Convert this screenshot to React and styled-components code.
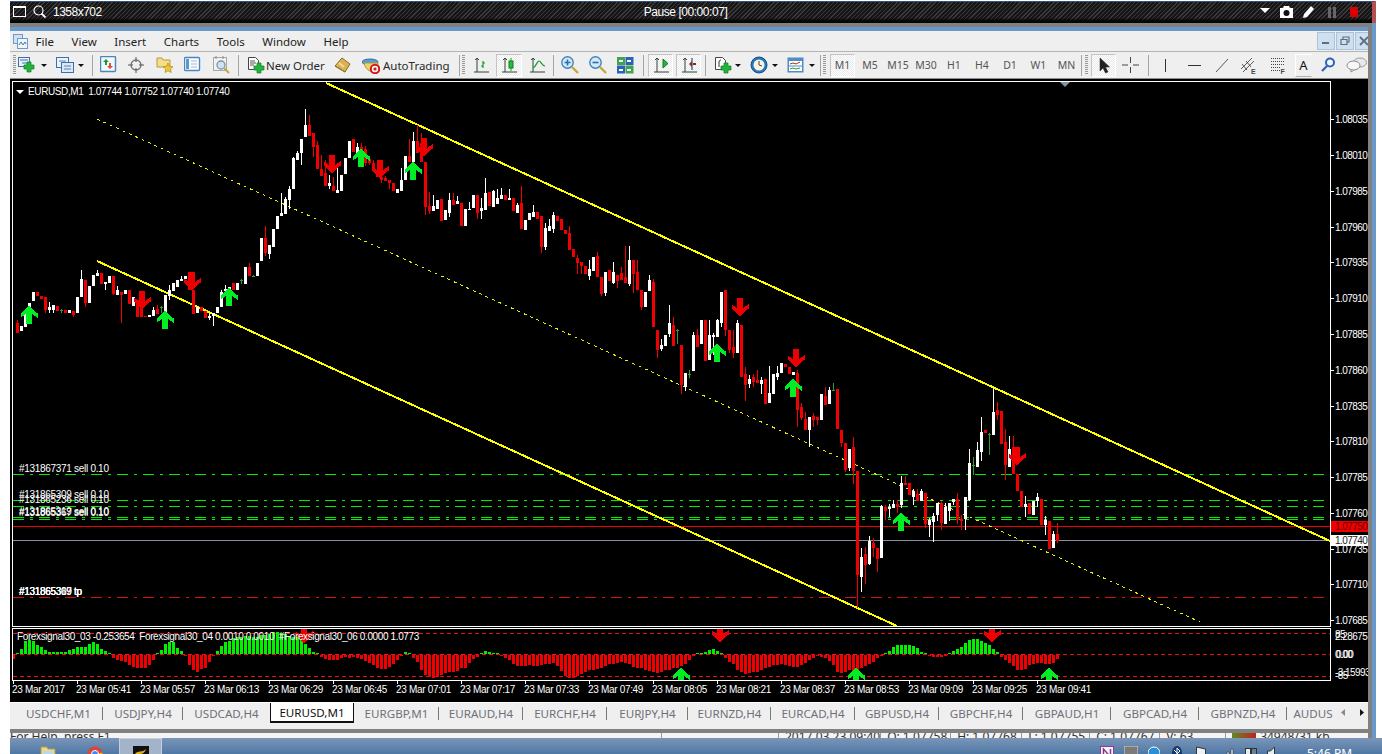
import React from "react";
import styled, { createGlobalStyle } from "styled-components";

const GlobalStyle = createGlobalStyle`
  html, body {
    margin: 0;
    padding: 0;
    background: #fff;
  }
  * {
    box-sizing: border-box;
  }
`;

const UI_FONT = `"Noto Sans", "Liberation Sans", sans-serif`;
const CHART_FONT = `"Liberation Sans", Arial, sans-serif`;

// candle rows: colour, body top, body bottom, wick top, wick bottom. y values are 3x crop units from the base y
const SEGMENT_A = `r 668 698 660 700|w 678 692|w 636 680|w 610 630|w 576 603|r 576 588|r 588 596|r 592 630 592 638|w 622 630 606 638|w 616 630 616 640|r 618 632|g 628 640|r 630 640|w 630 640|r 632 645 632 652|w 592 640|w 538 590 510 590|r 540 610 540 622|w 558 610|w 526 558|w 518 528 510 528|r 520 552|w 546 552 546 570|w 528 548|r 528 582 528 586|w 570 586 558 586|r 576 586 576 668|w 570 582|r 570 612|w 592 618|r 600 650|r 620 650|r 648 652|w 645 650|w 630 648 620 648|r 628 642 615 642|g 618 640|w 585 635|w 570 588 556 600|w 550 572|w 540 560|w 536 544 528 544|w 528 536|r 515 570|r 570 642|w 620 640|r 622 634|r 634 654|w 648 654 640 660|w 640 648 640 678|w 622 640|w 575 622 570 622|w 568 574 556 574|w 562 570|r 548 570|w 550 570|g 538 552|w 502 552|r 502 528 490 528|g 525 530|w 490 528|w 415 482|r 415 460 378 468|w 435 462 435 476|w 388 440|w 348 386|w 338 348 280 348|w 298 342 292 342|w 268 300 258 326|w 174 266 170 266|w 158 180 154 180|w 118 158 118 196|w 75 110 28 110|r 75 108 45 108|r 98 140 98 170|r 135 208 124 208|r 208 228 165 228|r 220 258 180 258|w 250 258 225 266|r 258 272 230 272|w 270 278 196 278|w 225 272|w 175 222|w 124 175|r 118 155|w 140 160 130 160|r 140 160 128 160|r 148 188 138 198|r 178 190 178 196|r 188 210 180 210|r 210 232|r 232 240 232 248|r 234 244 228 244|r 240 250 240 268|r 250 272|w 268 278|w 240 272 205 272|w 168 240|r 168 186 118 186|w 124 186 96 186|r 124 160 75 160|r 130 185 100 185|r 186 320 186 346|r 318 332 276 342|w 318 332 285 332|w 300 328|r 296 362|w 330 360|w 300 340 280 350|r 300 316 280 316|w 304 312 288 312`;

const SEGMENT_B = `r 128 198|w 148 198|w 146 150 125 150|w 105 145|r 105 158 105 176|w 144 152 114 176|w 98 150 54 150|r 96 138|w 92 140 90 140|w 114 132 88 132|w 105 117 85 117|r 105 120|w 114 120 88 120|r 114 154|w 134 160 130 160|r 130 208 78 208|w 180 210|w 158 180|w 155 170 136 170|r 155 178|r 168 262 168 278|w 204 262 190 270|w 198 212 178 212|w 165 208 156 220|r 168 184|r 178 210|r 210 222|r 220 270 198 270|r 266 292|r 294 310 285 342|r 306 318 306 342|r 318 342|w 326 348 300 360|w 292 334|r 288 350 276 350|r 350 402 350 408|w 336 400 336 408|r 330 364|w 336 368 306 372|r 344 362 344 384|r 340 360 322 360|r 350 370 258 370|w 300 372 258 378|r 300 342 300 398|r 336 390 300 390|r 390 440 390 450|w 396 440|w 360 394 346 394|r 366 500 358 500|r 510 570 510 594|w 556 566 538 572|w 526 558|w 490 522 435 532|r 495 558 472 558|g 508 552|r 555 676 555 702|w 640 682 640 692|g 640 644 630 654|w 525 632 516 632|r 525 562 507 562|w 480 552|r 480 603|w 525 600 480 600|w 524 530 518 584|w 480 532 476 532|w 396 490 396 500|r 390 510 390 528|r 510 570 510 578|r 560 580 510 594|w 490 578 480 578|r 495 650|r 642 675 620 722|w 656 672 645 684|r 652 666 642 680|r 660 670 630 670|w 660 672 650 702|r 656 732|w 700 730 618 730|w 642 702|w 638 652 618 660|w 610 640|r 612 622|r 620 642|w 636 644|r 640 750 630 800|r 740 774 730 780|r 778 810 756 810|w 770 810 770 862|r 768 780 758 800|r 770 780 770 795|w 702 780|r 708 735 682 735|w 690 732 682 732|g 686 690 670 692|r 686 806`;

const SEGMENT_C = `r 180 220 180 232|r 220 300 220 305|w 236 295 236 304|r 232 304 202 342|r 304 615 304 714|w 560 620 534 666|r 552 584 532 642|w 512 582 498 586|r 520 534 504 562|r 534 566 534 606|w 408 564 404 564|r 412 424 404 450|w 410 416 402 440|w 402 414 390 414|r 402 412 390 430|w 340 406 318 414|r 340 345 318 345|r 340 374|w 362 380 356 404|r 372 394 358 394|w 364 394 358 394|r 370 462 370 474|w 450 464 445 500|w 438 456 428 515|w 400 436 400 452|r 400 460 392 480|w 412 462 400 462|w 400 422 400 454|w 388 396 388 404|r 388 450 370 462|r 446 452 436 480|w 380 448 380 480|w 280 390 238 394|g 282 286 262 314|w 240 290 216 290|w 186 246 140 272|r 180 190|g 188 192 188 254|w 126 194 58 194|r 120 135 96 150|r 124 222|r 216 286 178 330|w 236 292 198 292|r 230 312 198 312|r 312 362|r 364 412|w 402 410 378 440|r 400 432|w 392 434|w 380 394 368 410|r 388 465|w 450 465 438 495|r 454 538|w 492 534 484 534|r 492 513 460 518`;

const CANDLE_FILL = { r: "#f00000", w: "#ffffff", g: "#2f9e2f" };

const parseSegment = (text, baseY) =>
  text.split("|").map((row) => {
    const [kind, top, bottom, high, low] = row.split(" ");
    const toY = (v) => Math.round(baseY + Number(v) / 3);
    return {
      kind,
      top: toY(top),
      bottom: toY(bottom),
      high: high ? toY(high) : toY(top),
      low: low ? toY(low) : toY(bottom),
    };
  });

const CANDLES = [
  ...parseSegment(SEGMENT_A, 100),
  ...parseSegment(SEGMENT_B, 160),
  ...parseSegment(SEGMENT_C, 370),
];

const HISTOGRAM = [
  -12, 4, 16, 38, 42, 40, 28, 20, 12, 7, 5, 6, 5, 6, 12, 14, 20, 20, 22, 30, 36, 30, 14, 8, 3, -8, -14, -18, -20, -30, -35, -40, -40, -38, -30, -15, 2, 12, 30, 36, 36, 18, 8, -2, -30, -45, -50, -42, -38, -22, -4, 10, 25, 35, 40, 48, 50, 50, 55, 55, 50, 52, 56, 56, 60, 66, 67, 62, 60, 55, 52, 50, 44, 30, 18, 6, 1, -6, -12, -16, -14, -14, -10, -6, -8, -5, -10, -12, -18, -25, -30, -38, -42, -42, -36, -28, -15, -2, 5, 2, -8, -22, -45, -60, -65, -68, -65, -60, -55, -50, -50, -48,
  -40, -40, -25, -12, -6, 3, 8, 5, 3, 2, -2, -8, -16, -28, -32, -32, -32, -30, -32, -32, -30, -28, -26, -24, -34, -48, -64, -70, -70, -64, -58, -52, -46, -46, -42, -38, -32, -26, -26, -24, -20, -24, -28, -36, -38, -40, -44, -48, -52, -54, -50, -46, -44, -40, -40, -34, -28, -16, -4, 1, 2, 6, 12, 14, 10, 2, -8, -20, -26, -44, -50, -58, -54, -52, -50, -46, -40, -36, -30, -30, -28, -30, -34, -36, -36, -30, -24, -16, -8, -4, -6, -8, -18, -30, -50, -54, -50, -46, -48, -50, -40, -34, -26, -20, -8, -2, 2, 10, 20, 26, 28, 28, 26, 24, 18,
  6, 1, -4, -6, -5, -6, -3, 4, 8, 14, 22, 34, 42, 44, 44, 40, 34, 28, 14, 6, -6, -16, -24, -32, -44, -46, -42, -30, -26, -24, -24, -28, -28, -24, -12,
];

const UP_SIGNALS = [[29, 315], [165, 320], [229, 297], [361, 158], [413, 171], [717, 353], [793, 388], [901, 522]];
const DOWN_SIGNALS = [[142, 300], [192, 281], [332, 164], [380, 169], [424, 147], [740, 307], [796, 358], [1017, 456]];

const LEVELS = [
  { y: 474, color: "#00ee00" },
  { y: 500, color: "#00ee00" },
  { y: 506, color: "#00ee00" },
  { y: 517, color: "#00ee00" },
  { y: 519, color: "#00ee00" },
  { y: 597, color: "#d81010" },
];

const TRADE_LABELS = [
  ["#131867371 sell 0.10", 19, 472],
  ["#131865236 sell 0.10", 19, 503],
  ["#131865309 sell 0.10", 19, 498],
  ["#131865367 sell 0.10", 19, 516],
  ["#131865319 sell 0.10", 19, 515],
  ["#131865309 tp", 19, 595],
  ["#131865367 tp", 19, 595],
  ["#131865319 tp", 19, 595],
];

const PRICES = ["1.08035", "1.08010", "1.07985", "1.07960", "1.07935", "1.07910", "1.07885", "1.07860", "1.07835", "1.07810", "1.07785", "1.07760", "1.07735", "1.07710", "1.07685"];

const TIMES = ["23 Mar 2017", "23 Mar 05:41", "23 Mar 05:57", "23 Mar 06:13", "23 Mar 06:29", "23 Mar 06:45", "23 Mar 07:01", "23 Mar 07:17", "23 Mar 07:33", "23 Mar 07:49", "23 Mar 08:05", "23 Mar 08:21", "23 Mar 08:37", "23 Mar 08:53", "23 Mar 09:09", "23 Mar 09:25", "23 Mar 09:41"];

const TABS = [
  ["USDCHF,M1", 89],
  ["USDJPY,H4", 80],
  ["USDCAD,H4", 87],
  ["EURUSD,M1", 84],
  ["EURGBP,M1", 85],
  ["EURAUD,H4", 84],
  ["EURCHF,H4", 84],
  ["EURJPY,H4", 81],
  ["EURNZD,H4", 83],
  ["EURCAD,H4", 84],
  ["GBPUSD,H4", 84],
  ["GBPCHF,H4", 84],
  ["GBPAUD,H1", 88],
  ["GBPCAD,H4", 88],
  ["GBPNZD,H4", 88],
];

const MENU = ["File", "View", "Insert", "Charts", "Tools", "Window", "Help"];

const Page = styled.div`
  width: 1382px;
  height: 754px;
  padding: 1px 0 0 10px;
  display: flex;
  flex-direction: column;
  overflow: hidden;
  background: #fff;
`;

const Recorder = styled.header`
  flex: 0 0 22px;
  margin-right: 6px;
  display: flex;
  align-items: center;
  border-top: 1px solid #34527e;
  border-right: 4px solid #b65050;
  padding-bottom: 2px;
  color: #fff;
  font: 12px ${CHART_FONT};
  letter-spacing: -0.5px;
  background:
    linear-gradient(180deg, rgba(0, 0, 0, 0) 75%, #050505 90%),
    repeating-linear-gradient(135deg, #3a3a3a 0 1px, #161616 1px 3px);
`;

const RecorderSide = styled.div`
  flex: 1;
  display: flex;
  align-items: center;
  justify-content: ${(p) => (p.$end ? "flex-end" : "flex-start")};
  padding: ${(p) => (p.$end ? "0 14px 0 0" : "0 0 0 3px")};
`;

const RecorderTitle = styled.span`
  letter-spacing: -0.45px;
`;

const SizeText = styled.span`
  display: flex;
  margin-left: 7px;
`;

const Terminal = styled.div`
  flex: 1;
  min-height: 0;
  margin-right: 6px;
  display: flex;
  flex-direction: column;
  border-right: 4px solid #6a97c9;
  background: #808080;
`;

const TerminalInner = styled.div`
  flex: 1;
  min-height: 0;
  display: flex;
  flex-direction: column;
  border-top: 4px solid #808080;
  border-right: 4px solid #808080;
  background: #efefef;
  overflow: hidden;
`;

const MenuBar = styled.nav`
  flex: 0 0 25px;
  display: flex;
  align-items: center;
  gap: 17.6px;
  padding-left: 3px;
  border-top: 4px solid #6a97c9;
  border-bottom: 1px solid #b4b4b4;
  background: #efefef;
  color: #222;
  font: 11.5px ${UI_FONT};
`;

const MenuLogo = styled.span`
  display: flex;
  margin-right: -10px;
`;

const WindowButtons = styled.div`
  margin-left: auto;
  display: flex;
  gap: 1px;
  margin-right: -5px;
`;

const WindowButton = styled.span`
  width: 18px;
  height: 18px;
  display: flex;
  align-items: center;
  justify-content: center;
  border: 1px solid #a9c3da;
  background: #cfe0f0;
`;

const ToolBar = styled.div`
  flex: 0 0 27px;
  display: flex;
  align-items: center;
  border-bottom: 1px solid #8d8d8d;
  background: #efefef;
  color: #2a2a2a;
  font: 11.5px ${UI_FONT};
`;

const Slot = styled.span`
  flex: 0 0 ${(p) => p.$w}px;
  height: 23px;
  margin-left: ${(p) => p.$ml || 0}px;
  display: flex;
  align-items: center;
  justify-content: center;
  color: ${(p) => (p.$ink ? "#111" : "#555")};
  font-size: ${(p) => (p.$ink ? 13 : 10.5)}px;
  ${(p) =>
    p.$pressed &&
    `
    border: 1px solid #c4c4c4;
    border-right-color: #fff;
    border-bottom-color: #fff;
    background: repeating-conic-gradient(#fff 0 25%, #e9e9e9 0 50%) 0 0 / 2px 2px;
  `}
  ${(p) =>
    p.$raised &&
    `
    border: 1px solid #fff;
    border-right-color: #efefef;
    border-bottom-color: #b0b0b0;
  `}
`;

const TextTool = styled.span`
  flex: 0 0 ${(p) => p.$w}px;
  display: flex;
  align-items: center;
  padding-left: ${(p) => p.$pl}px;
  gap: ${(p) => p.$gap}px;
  white-space: nowrap;
`;

const ToolSep = styled.span`
  flex: 0 0 1px;
  height: 21px;
  margin-left: ${(p) => p.$ml || 0}px;
  background: #a6a6a6;
`;

const Grip = styled.span`
  flex: 0 0 ${(p) => p.$w}px;
  height: 20px;
  background: repeating-linear-gradient(180deg, #9a9a9a 0 1px, transparent 1px 2px) center / 3px 100% no-repeat;
`;

const Caret = styled.span`
  flex: 0 0 ${(p) => p.$w}px;
  display: flex;
  justify-content: center;
  &::before {
    content: "";
    border-left: 3px solid transparent;
    border-right: 3px solid transparent;
    border-top: 3px solid #111;
  }
`;

const ChartArea = styled.main`
  flex: 0 0 623px;
  min-height: 0;
  display: flex;
  flex-direction: column;
  padding: 2px 0 0 2px;
  background: #000;
`;

const PaneRow = styled.div`
  flex: 0 0 ${(p) => p.$h}px;
  height: ${(p) => p.$h}px;
  min-height: 0;
  margin-top: ${(p) => p.$mt || 0}px;
  display: flex;
`;

const Pane = styled.div`
  position: relative;
  flex: 0 0 1319px;
  border: 1px solid #fff;
  overflow: hidden;
  svg {
    display: block;
  }
`;

const PaneTitle = styled.div`
  position: absolute;
  top: ${(p) => p.$top}px;
  left: ${(p) => p.$left}px;
  display: flex;
  align-items: center;
  gap: 4px;
  color: #fff;
  font: 10px ${CHART_FONT};
  letter-spacing: -0.38px;
  white-space: pre;
`;

const Triangle = styled.span`
  border-left: 4px solid transparent;
  border-right: 4px solid transparent;
  border-top: 4px solid #fff;
`;

const ShiftMarker = styled.span`
  position: absolute;
  top: 0;
  left: 1047px;
  border-left: 5px solid transparent;
  border-right: 5px solid transparent;
  border-top: 5px solid #7f93a8;
`;

const PriceAxis = styled.div`
  position: relative;
  flex: 1;
  min-height: 0;
  padding-top: ${(p) => p.$pt || 0}px;
  overflow: hidden;
  color: #fff;
  font: 10px ${CHART_FONT};
  letter-spacing: -0.55px;
`;

const PriceTick = styled.div`
  height: 35.77px;
  display: flex;
  align-items: center;
  padding-left: 4px;
  &::before {
    content: "";
    position: absolute;
    left: 0;
    width: 3px;
    height: 1px;
    background: #fff;
  }
`;

const PriceTag = styled.span`
  position: absolute;
  top: ${(p) => p.$top}px;
  left: 0;
  right: 0;
  height: 11px;
  padding-left: 4px;
  line-height: 11px;
  background: ${(p) => p.$bg};
  color: ${(p) => p.$color};
`;

const SubLabel = styled.span`
  position: absolute;
  top: ${(p) => p.$top}px;
  left: ${(p) => p.$left || 4}px;
  white-space: nowrap;
`;

const TimeAxis = styled.div`
  flex: 0 0 21px;
  display: flex;
  color: #fff;
  font: 10px ${CHART_FONT};
  letter-spacing: -0.32px;
`;

const TimeCell = styled.div`
  position: relative;
  flex: 0 0 64px;
  padding-top: 3px;
  white-space: nowrap;
  &::before {
    content: "";
    position: absolute;
    top: 0;
    left: 1px;
    width: 1px;
    height: 3px;
    background: #fff;
  }
`;

const TabBar = styled.div`
  flex: 0 0 27px;
  display: flex;
  align-items: flex-start;
  padding-left: 4px;
  border-top: 1px solid #fff;
  background: #efefef;
  color: #6f6f78;
  font: 11.6px ${UI_FONT};
  overflow: hidden;
  white-space: nowrap;
`;

const Tab = styled.span`
  position: relative;
  flex: 0 0 ${(p) => p.$w}px;
  height: ${(p) => (p.$active ? 20 : 19)}px;
  margin-top: ${(p) => (p.$active ? 0 : 1)}px;
  display: flex;
  align-items: center;
  justify-content: center;
  ${(p) =>
    p.$active &&
    `
    background: #fff;
    color: #111;
    border: 1px solid #111;
    border-top: 0;
    border-bottom-width: 2px;
  `}
  ${(p) =>
    p.$sep &&
    `
    &::after {
      content: "";
      position: absolute;
      right: 0;
      top: 3px;
      width: 1px;
      height: 13px;
      background: #7a7a7a;
    }
  `}
`;

const TabArrows = styled.span`
  display: flex;
  align-items: center;
  gap: 15px;
  margin-top: 6px;
  margin-left: 2px;
`;

const BottomRule = styled.div`
  flex: 0 0 4px;
  background: #808080;
`;

const StatusBar = styled.footer`
  flex: 0 0 5px;
  display: flex;
  overflow: hidden;
  background: #f4f4f4;
  color: #333;
  font: 12px/14px ${UI_FONT};
`;

const StatusCell = styled.span`
  flex: 0 0 ${(p) => p.$w}px;
  padding-left: ${(p) => p.$pl ?? 6}px;
  display: flex;
  align-items: flex-start;
  gap: 4px;
  border-left: ${(p) => (p.$first ? "0" : "1px solid #9a9a9a")};
  white-space: nowrap;
  line-height: 8px;
`;

const SignalBars = styled.span`
  width: 24px;
  height: 12px;
  background: linear-gradient(90deg, #5e8a20, #c42020);
`;

const Taskbar = styled.div`
  flex: 0 0 16px;
  display: flex;
  padding-top: 8px;
  overflow: hidden;
  background: linear-gradient(180deg, #7a95b8, #4f78a5);
  color: #fff;
  font: 12px ${UI_FONT};
  svg {
    flex: 0 0 auto;
  }
`;

const TaskSlot = styled.span`
  flex: 0 0 auto;
  margin-left: ${(p) => p.$ml}px;
  display: flex;
`;

const ActiveTask = styled.span`
  flex: 0 0 43px;
  height: 16px;
  margin-top: -8px;
  margin-left: ${(p) => p.$ml}px;
  padding: 7px 0 0 13px;
  border: 1px solid #c4d0df;
  border-bottom: 0;
  background: #a3b4c9;
`;

const Clock = styled.span`
  margin-left: 26px;
  margin-top: 1px;
  line-height: 14px;
`;

const ChartText = styled.text`
  fill: #fff;
  font: 10px ${CHART_FONT};
  letter-spacing: -0.3px;
`;

const ARROW = "0,-9.5 8.5,-1.5 8.5,3 2.8,-1.5 2.8,9 -2.8,9 -2.8,-1.5 -8.5,3 -8.5,-1.5";

function Signal({ x, y, down }) {
  return (
    <polygon
      points={ARROW}
      fill={down ? "#ee0000" : "#00ee22"}
      transform={`translate(${x} ${y})${down ? " scale(1 -1)" : ""}`}
    />
  );
}

function Candle({ candle, index }) {
  const x = 16 + index * 4;
  const fill = CANDLE_FILL[candle.kind];
  if (candle.kind === "g") {
    return (
      <g fill={fill}>
        <rect x={x + 1} y={candle.high} width={1} height={candle.low - candle.high} />
        <rect x={x} y={candle.top + 1} width={3} height={1} />
      </g>
    );
  }
  return (
    <g fill={fill}>
      <rect x={x + 1} y={candle.high} width={1} height={candle.low - candle.high} />
      <rect x={x} y={candle.top} width={3} height={candle.bottom - candle.top} />
    </g>
  );
}

function PriceChart() {
  return (
    <svg width="1317" height="544" viewBox="13 82 1317 544" shapeRendering="crispEdges">
      {LEVELS.map((l) => (
        <line key={l.y} x1="13" x2="1330" y1={l.y + 0.5} y2={l.y + 0.5} stroke={l.color} strokeDasharray="11 6 3 6" />
      ))}
      <line x1="13" x2="1330" y1="526.5" y2="526.5" stroke="#f00000" />
      <line x1="13" x2="1330" y1="540.5" y2="540.5" stroke="#8890a4" />
      <line x1="97" y1="119" x2="1200" y2="622" stroke="#eeee00" strokeDasharray="3 4" />
      <line x1="326" y1="83" x2="1330" y2="541" stroke="#ffff00" strokeWidth="2" />
      <line x1="97" y1="261" x2="897" y2="626" stroke="#ffff00" strokeWidth="2" />
      {CANDLES.map((c, i) => (
        <Candle key={i} candle={c} index={i} />
      ))}
      {UP_SIGNALS.map(([x, y]) => (
        <Signal key={x} x={x} y={y} />
      ))}
      {DOWN_SIGNALS.map(([x, y]) => (
        <Signal key={x} x={x} y={y} down />
      ))}
      <g shapeRendering="auto">
        {TRADE_LABELS.map(([text, x, y]) => (
          <ChartText key={text} x={x} y={y}>
            {text}
          </ChartText>
        ))}
      </g>
    </svg>
  );
}

function SignalPane() {
  return (
    <svg width="1317" height="51" viewBox="13 629 1317 51" shapeRendering="crispEdges">
      {[633, 654, 676].map((y) => (
        <line key={y} x1="13" x2="1330" y1={y + 0.5} y2={y + 0.5} stroke="#ee1010" strokeDasharray="4 3" />
      ))}
      {HISTOGRAM.map((v, i) => {
        const h = Math.max(1, Math.round(Math.abs(v) / 3));
        return (
          <rect
            key={i}
            x={12 + i * 4}
            y={v > 0 ? 654 - h : 655}
            width="3"
            height={h}
            fill={v > 0 ? "#00f000" : "#f00000"}
          />
        );
      })}
      <Signal x={304} y={634} down />
      <Signal x={720} y={633} down />
      <Signal x={992} y={633} down />
      <Signal x={681} y={677} />
      <Signal x={856} y={677} />
      <Signal x={1049} y={677} />
    </svg>
  );
}

const Ico = ({ w = 18, h = 18, children }) => (
  <svg width={w} height={h} viewBox={`0 0 ${w} ${h}`}>
    {children}
  </svg>
);

const Plus = ({ x, y, s = 1 }) => (
  <path
    transform={`translate(${x} ${y}) scale(${s})`}
    d="M3 0h4v3h3v4H7v3H3V7H0V3h3z"
    fill="#22b53a"
    stroke="#0e7a22"
    strokeWidth="0.7"
  />
);

const Axes = ({ color = "#2e4632" }) => (
  <path d="M5 2v14M2 16h3M5 16h12M3 4l2-2 2 2" fill="none" stroke={color} strokeWidth="1" />
);

const icons = {
  logo: (
    <Ico w={15} h={15}>
      <rect x="0.5" y="0.5" width="9" height="9" fill="#cfe2f5" stroke="#6f9ac8" />
      <rect x="4.5" y="4.5" width="10" height="10" fill="#eef5fb" stroke="#6f9ac8" />
      <path d="M6 11l2-3 2 3 2-3 1 2" fill="none" stroke="#4a78a8" />
    </Ico>
  ),
  newChart: (
    <Ico>
      <rect x="0.5" y="1.5" width="11" height="9" fill="#eaf2fb" stroke="#3e6fa8" />
      <path d="M2 4h8M4 7h5" stroke="#3e6fa8" />
      <Plus x={6} y={6} />
    </Ico>
  ),
  profiles: (
    <Ico>
      <rect x="0.5" y="1.5" width="12" height="10" fill="#eaf2fb" stroke="#3e6fa8" />
      <rect x="5.5" y="6.5" width="12" height="10" fill="#dbe8f6" stroke="#3e6fa8" />
      <path d="M3 5h7M8 10h7M8 13h7" stroke="#5b83b2" />
    </Ico>
  ),
  market: (
    <Ico>
      <rect x="0.5" y="0.5" width="15" height="15" rx="1" fill="#f2f7fb" stroke="#4a86bd" strokeWidth="1.4" />
      <path d="M6 3l3 3H7v3H5V6H3z" fill="#1c9c35" />
      <path d="M10 13l-3-3h2V7h2v3h2z" fill="#d9532c" />
    </Ico>
  ),
  target: (
    <Ico>
      <circle cx="8" cy="9" r="5" fill="none" stroke="#777" strokeWidth="1.3" />
      <path d="M8 1v5M8 12v5M0 9h5M11 9h5" stroke="#555" />
    </Ico>
  ),
  folderStar: (
    <Ico>
      <path d="M1 2h5l1 2h7v7H1z" fill="#f4dd8c" stroke="#b89a3d" />
      <path d="M12 7l1.6 3.3 3.4.4-2.5 2.4.7 3.4-3.2-1.7-3 1.7.6-3.4-2.5-2.4 3.4-.4z" fill="#f2c530" stroke="#a98820" strokeWidth="0.7" />
    </Ico>
  ),
  navigator: (
    <Ico>
      <rect x="0.5" y="1.5" width="15" height="13" rx="1" fill="#fbfdff" stroke="#4a86bd" strokeWidth="1.4" />
      <rect x="2" y="3" width="3" height="10" fill="#5f96cb" />
      <path d="M7 5h6M7 8h6M7 11h6" stroke="#9bb7d4" />
    </Ico>
  ),
  tester: (
    <Ico>
      <rect x="0.5" y="1.5" width="13" height="13" fill="#f1f1ee" stroke="#a8a8a0" />
      <path d="M3 0v3M10 0v3" stroke="#888" />
      <circle cx="8" cy="9" r="4" fill="#cfe2f3" stroke="#7c94ab" strokeWidth="1.3" />
      <path d="M11 12l5 5" stroke="#c6a640" strokeWidth="2" />
    </Ico>
  ),
  order: (
    <Ico>
      <path d="M1.5 1.5h7l3 3v9h-10z" fill="#fff" stroke="#444" />
      <path d="M3 5h5M3 7h6M3 9h4" stroke="#555" />
      <Plus x={7} y={7} />
    </Ico>
  ),
  gold: (
    <Ico>
      <path d="M1 10L8 2l8 6-5 8z" fill="#d9b253" stroke="#8a6b22" />
      <path d="M1 10l10 6" stroke="#8a6b22" />
      <path d="M5 7l5 4" stroke="#f3dd96" strokeWidth="2" />
    </Ico>
  ),
  auto: (
    <Ico>
      <ellipse cx="8" cy="6" rx="8" ry="3" fill="#5a9bd0" stroke="#2d6ea4" />
      <path d="M2 7c1 6 6 9 10 9l4-4V7z" fill="#ead46a" stroke="#b09a3c" />
      <circle cx="13" cy="13" r="4.2" fill="#fff" stroke="#d01818" strokeWidth="2" />
      <rect x="11.6" y="11.6" width="2.8" height="2.8" fill="#d01818" />
    </Ico>
  ),
  bar: (
    <Ico>
      <Axes />
      <path d="M11 5v7M9 10h2M11 7h2" stroke="#109a28" strokeWidth="1.2" fill="none" />
    </Ico>
  ),
  candle: (
    <Ico>
      <Axes />
      <path d="M11 2v13" stroke="#109a28" />
      <rect x="9" y="5" width="4" height="7" fill="#22c13a" stroke="#0e7a22" />
    </Ico>
  ),
  line: (
    <Ico>
      <Axes />
      <path d="M5 12c3-1 4-7 6-7s3 5 6 5" fill="none" stroke="#109a28" strokeWidth="1.2" />
    </Ico>
  ),
  zoomIn: (
    <Ico>
      <circle cx="6.5" cy="6.5" r="5.7" fill="#d4e9f8" stroke="#3f86bd" strokeWidth="1.4" />
      <path d="M3.5 6.5h6M6.5 3.5v6" stroke="#2d6ea4" strokeWidth="1.6" />
      <path d="M11 11l6 6" stroke="#c6a640" strokeWidth="2.4" />
    </Ico>
  ),
  zoomOut: (
    <Ico>
      <circle cx="6.5" cy="6.5" r="5.7" fill="#d4e9f8" stroke="#3f86bd" strokeWidth="1.4" />
      <path d="M3.5 6.5h6" stroke="#2d6ea4" strokeWidth="1.6" />
      <path d="M11 11l6 6" stroke="#c6a640" strokeWidth="2.4" />
    </Ico>
  ),
  tile: (
    <Ico>
      <rect x="0" y="1" width="8" height="8" fill="#3da54a" />
      <rect x="8.5" y="1" width="8" height="8" fill="#2a62b8" />
      <rect x="0" y="9.5" width="8" height="8" fill="#2a62b8" />
      <rect x="8.5" y="9.5" width="8" height="8" fill="#3da54a" />
      <path d="M2 5h4M10 5h4M2 14h4M10 14h4" stroke="#fff" strokeWidth="2" />
    </Ico>
  ),
  autoscroll: (
    <Ico>
      <Axes />
      <path d="M11 3v9l5-4.5z" fill="#29b33d" stroke="#0e7a22" />
    </Ico>
  ),
  shift: (
    <Ico>
      <Axes />
      <path d="M12 2v12" stroke="#2b5ea8" strokeWidth="1.3" />
      <path d="M9 8l3-3v6zM13 7h3v2h-3z" fill="#8a2a10" />
    </Ico>
  ),
  indicators: (
    <Ico>
      <path d="M1.5 1.5h7l3 3v9h-10z" fill="#fff" stroke="#444" />
      <path d="M5 11V6c0-2 2-2 2-2" fill="none" stroke="#333" />
      <Plus x={7} y={7} />
    </Ico>
  ),
  clock: (
    <Ico>
      <circle cx="9" cy="9" r="8" fill="#2675bd" stroke="#174f86" />
      <circle cx="9" cy="9" r="5.5" fill="#f7f3df" />
      <path d="M9 5v4l3 1" fill="none" stroke="#444" />
    </Ico>
  ),
  templates: (
    <Ico>
      <rect x="0.5" y="1.5" width="16" height="15" fill="#4d8dc8" />
      <rect x="2" y="5" width="13" height="4.5" fill="#fff" />
      <rect x="2" y="10.5" width="13" height="4.5" fill="#fff" />
      <path d="M3 8l3-1 3 1 4-2" fill="none" stroke="#b03010" />
      <path d="M3 13l3-1 3 1 4-1" fill="none" stroke="#2a9a3a" />
    </Ico>
  ),
  pointer: (
    <Ico>
      <path d="M5 2l0 13 3-3 2.5 5 2.5-1-2.5-5h4z" fill="#222" stroke="#222" strokeWidth="0.5" />
    </Ico>
  ),
  crosshair: (
    <Ico>
      <path d="M8.5 1v6M8.5 11v6M0 9h6M11 9h6" stroke="#444" />
    </Ico>
  ),
  vline: (
    <Ico w={3}>
      <path d="M1.5 3v13" stroke="#333" />
    </Ico>
  ),
  hline: (
    <Ico w={13}>
      <path d="M0 9.5h13" stroke="#333" />
    </Ico>
  ),
  trend: (
    <Ico w={14}>
      <path d="M1 16L13 3" stroke="#555" />
    </Ico>
  ),
  channels: (
    <Ico w={18}>
      <path d="M1 13L12 2M3 16L14 5M2 8l5 6M6 5l5 6" stroke="#333" strokeWidth="0.8" fill="none" />
      <text x="11" y="18" fontSize="7" fontFamily="Liberation Sans" fill="#444" fontWeight="700">E</text>
    </Ico>
  ),
  fibo: (
    <Ico w={16}>
      <path d="M1 2.5h14M1 5.5h14M1 8.5h14M1 11.5h10M1 14.5h9" stroke="#444" strokeDasharray="1 1" />
      <text x="10.5" y="18" fontSize="7" fontFamily="Liberation Sans" fill="#444" fontWeight="700">F</text>
    </Ico>
  ),
  search: (
    <Ico w={14} h={16}>
      <circle cx="9" cy="5.5" r="4" fill="#f0f6fc" stroke="#2d62b4" strokeWidth="2" />
      <path d="M6 9l-5 5" stroke="#2d62b4" strokeWidth="2.2" />
    </Ico>
  ),
  chat: (
    <Ico w={22} h={16}>
      <ellipse cx="14" cy="5.5" rx="6.5" ry="4.5" fill="#e8e8e8" stroke="#9a9a9a" />
      <ellipse cx="7.5" cy="8.5" rx="6.5" ry="4.5" fill="#f7f7f7" stroke="#8a8a8a" />
      <path d="M5 13v2l3-2" fill="#f7f7f7" stroke="#8a8a8a" />
    </Ico>
  ),
};

const TIMEFRAMES = [["M5", 28, 1], ["M15", 28], ["M30", 28], ["H1", 28], ["H4", 28], ["D1", 28], ["W1", 29], ["MN", 27]];

function Toolbar() {
  return (
    <ToolBar>
      <Grip $w={8} />
      <Slot $w={18}>{icons.newChart}</Slot>
      <Caret $w={16} />
      <Slot $w={26}>{icons.profiles}</Slot>
      <Caret $w={5} />
      <ToolSep $ml={8} />
      <Slot $w={32}>{icons.market}</Slot>
      <Slot $w={24}>{icons.target}</Slot>
      <Slot $w={31}>{icons.folderStar}</Slot>
      <Slot $w={26}>{icons.navigator}</Slot>
      <Slot $w={32}>{icons.tester}</Slot>
      <ToolSep />
      <TextTool $w={92} $pl={8} $gap={1}>
        {icons.order}
        New Order
      </TextTool>
      <Slot $w={24}>{icons.gold}</Slot>
      <TextTool $w={102} $pl={7} $gap={3}>
        {icons.auto}
        AutoTrading
      </TextTool>
      <ToolSep $ml={2} />
      <Grip $w={7} />
      <Slot $w={28}>{icons.bar}</Slot>
      <Slot $w={26} $ml={1} $pressed>
        {icons.candle}
      </Slot>
      <Slot $w={30}>{icons.line}</Slot>
      <ToolSep $ml={1} />
      <Slot $w={32}>{icons.zoomIn}</Slot>
      <Slot $w={24}>{icons.zoomOut}</Slot>
      <Slot $w={32}>{icons.tile}</Slot>
      <ToolSep $ml={1} />
      <Slot $w={25} $ml={4} $pressed>
        {icons.autoscroll}
      </Slot>
      <Slot $w={25} $ml={3} $pressed>
        {icons.shift}
      </Slot>
      <ToolSep $ml={4} />
      <Slot $w={18} $ml={8}>{icons.indicators}</Slot>
      <Caret $w={11} />
      <Slot $w={18} $ml={7}>{icons.clock}</Slot>
      <Caret $w={13} />
      <Slot $w={18} $ml={6}>{icons.templates}</Slot>
      <Caret $w={13} />
      <ToolSep $ml={2} />
      <Grip $w={7} />
      <Slot $w={25} $ml={2} $pressed>
        M1
      </Slot>
      {TIMEFRAMES.map(([label, w, ml]) => (
        <Slot key={label} $w={w} $ml={ml}>
          {label}
        </Slot>
      ))}
      <ToolSep $ml={1} />
      <Grip $w={9} />
      <Slot $w={25} $pressed>
        {icons.pointer}
      </Slot>
      <Slot $w={30}>{icons.crosshair}</Slot>
      <ToolSep $ml={2} />
      <Slot $w={32}>{icons.vline}</Slot>
      <Slot $w={26}>{icons.hline}</Slot>
      <Slot $w={30}>{icons.trend}</Slot>
      <Slot $w={24}>{icons.channels}</Slot>
      <Slot $w={34}>{icons.fibo}</Slot>
      <Slot $w={17} $ink $raised>
        A
      </Slot>
      <Slot $w={32}>{icons.search}</Slot>
      <Slot $w={25}>{icons.chat}</Slot>
    </ToolBar>
  );
}

function TaskIcons() {
  return (
    <>
      <TaskSlot $ml={30}>
        <Ico w={16} h={14}>
          <path d="M1 1h6l1 2h7v10H1z" fill="#ecd98c" stroke="#b59a48" />
          <rect x="3" y="5" width="10" height="6" fill="#b7d8ef" />
        </Ico>
      </TaskSlot>
      <TaskSlot $ml={31}>
        <Ico w={16} h={16}>
          <circle cx="8" cy="8" r="7.5" fill="#db4437" />
          <path d="M8 8L1.5 12A7.5 7.5 0 0 0 12 14.5z" fill="#0f9d58" />
          <path d="M8 8l7.4-1.5A7.5 7.5 0 0 1 10 15z" fill="#f4b400" />
          <circle cx="8" cy="8" r="3.5" fill="#4285f4" stroke="#fff" />
        </Ico>
      </TaskSlot>
      <ActiveTask $ml={16}>
        <Ico w={16} h={14}>
          <rect width="16" height="14" fill="#111" />
          <path d="M2 8c3-4 7-1 11-5-1 4-4 5-6 5 1 1 2 2 3 2-3 1-6 1-8-2z" fill="#d8b21c" />
        </Ico>
      </ActiveTask>
    </>
  );
}

function TrayIcons() {
  return (
    <>
      <TaskSlot $ml={938}>
        <Ico w={14} h={14}>
          <rect x="0.5" y="0.5" width="13" height="13" fill="#f4eef6" stroke="#8d3c97" />
          <path d="M3.5 11V3l7 8V3" fill="none" stroke="#80397b" strokeWidth="1.4" />
        </Ico>
      </TaskSlot>
      <TaskSlot $ml={10}>
        <Ico w={14} h={14}>
          <rect width="14" height="14" fill="#7b7b7b" stroke="#d8d8d8" />
        </Ico>
      </TaskSlot>
      <TaskSlot $ml={10}>
        <Ico w={12} h={14}>
          <circle cx="6" cy="7" r="6" fill="#2a8fd6" stroke="#fff" />
        </Ico>
      </TaskSlot>
      <TaskSlot $ml={12}>
        <Ico w={10} h={14}>
          <ellipse cx="5" cy="7" rx="5" ry="7" fill="#13386b" />
          <path d="M2 4l6 6-3 3V2l3 3-6 6" fill="none" stroke="#fff" />
        </Ico>
      </TaskSlot>
      <TaskSlot $ml={14}>
        <Ico w={10} h={14}>
          <path d="M0.5 1l9 2v9l-9-2z" fill="#eef2f7" stroke="#333" />
        </Ico>
      </TaskSlot>
      <TaskSlot $ml={16}>
        <Ico w={12} h={14}>
          <path d="M1 12h2V9H1zM5 12h2V6H5zM9 12h2V3H9z" fill="#e8edf3" stroke="#333" strokeWidth="0.6" />
        </Ico>
      </TaskSlot>
      <TaskSlot $ml={11}>
        <Ico w={12} h={14}>
          <rect x="0.5" y="2.5" width="5" height="10" fill="#e8edf3" stroke="#333" />
          <rect x="6.5" y="2.5" width="5" height="10" fill="#6b7f95" stroke="#333" />
        </Ico>
      </TaskSlot>
      <TaskSlot $ml={10}>
        <Ico w={14} h={14}>
          <path d="M0.5 5h3l4-4v12l-4-4h-3z" fill="#e8edf3" stroke="#333" />
          <path d="M9 9l4 4M13 9l-4 4" stroke="#d01818" strokeWidth="1.6" />
        </Ico>
      </TaskSlot>
      <Clock>5:46 PM</Clock>
    </>
  );
}

export default function App() {
  return (
    <>
      <GlobalStyle />
      <Page>
        <Recorder>
          <RecorderSide>
            <svg width="13" height="11" viewBox="0 0 13 11">
              <rect x="0.5" y="0.5" width="12" height="10" fill="none" stroke="#fff" />
              <path d="M1 1.5h11" stroke="#fff" />
            </svg>
            <SizeText>
              <svg width="13" height="13" viewBox="0 0 13 13">
                <circle cx="5.5" cy="5.5" r="4.5" fill="none" stroke="#fff" strokeWidth="1.2" />
                <path d="M8.5 8.5l4 4" stroke="#fff" strokeWidth="1.8" />
              </svg>
            </SizeText>
            <SizeText>1358x702</SizeText>
          </RecorderSide>
          <RecorderTitle>Pause [00:00:07]</RecorderTitle>
          <RecorderSide $end>
            <svg width="98" height="14" viewBox="0 0 98 14">
              <path d="M0 3h10L5 8z" fill="#fff" />
              <path d="M20 3h3l1-2h5l1 2h3v10H20z" fill="#fff" />
              <circle cx="26.5" cy="8" r="3" fill="#111" />
              <path d="M43 13l1-4 7-8 3 3-7 8z" fill="#fff" />
              <rect x="68" y="2" width="3" height="11" fill="#666" />
              <rect x="73" y="2" width="3" height="11" fill="#666" />
              <rect x="90" y="2" width="8" height="10" fill="#d80000" />
            </svg>
          </RecorderSide>
        </Recorder>
        <Terminal>
          <TerminalInner>
            <MenuBar>
              <MenuLogo>{icons.logo}</MenuLogo>
              {MENU.map((item) => (
                <span key={item}>{item}</span>
              ))}
              <WindowButtons>
                <WindowButton>
                  <svg width="8" height="8" viewBox="0 0 8 8">
                    <rect y="5" width="7" height="2" fill="#5c6f80" />
                  </svg>
                </WindowButton>
                <WindowButton>
                  <svg width="10" height="10" viewBox="0 0 10 10">
                    <path d="M3 3V1h6v5H7M1 3.5h6v5H1z" fill="none" stroke="#5c6f80" strokeWidth="1.2" />
                  </svg>
                </WindowButton>
                <WindowButton>
                  <svg width="10" height="10" viewBox="0 0 10 10">
                    <path d="M1 1l8 8M9 1l-8 8" stroke="#5c6f80" strokeWidth="1.8" />
                  </svg>
                </WindowButton>
              </WindowButtons>
            </MenuBar>
            <Toolbar />
            <ChartArea>
              <PaneRow $h={546}>
                <Pane>
                  <PriceChart />
                  <PaneTitle $top={4} $left={3}>
                    <Triangle />
                    {"EURUSD,M1  1.07744 1.07752 1.07740 1.07740"}
                  </PaneTitle>
                  <ShiftMarker />
                </Pane>
                <PriceAxis $pt={21}>
                  {PRICES.map((p) => (
                    <PriceTick key={p}>{p}</PriceTick>
                  ))}
                  <PriceTag $top={440} $bg="#f00000" $color="#6a0000">1.07750</PriceTag>
                  <PriceTag $top={454} $bg="#ffffff" $color="#222">1.07740</PriceTag>
                </PriceAxis>
              </PaneRow>
              <PaneRow $h={53} $mt={1}>
                <Pane>
                  <SignalPane />
                  <PaneTitle $top={2} $left={4}>
                    {"Forexsignal30_03 -0.253654  Forexsignal30_04 0.0010 0.0010  #Forexsignal30_06 0.0000 1.0773"}
                  </PaneTitle>
                </Pane>
                <PriceAxis>
                  <SubLabel $top={1}>85</SubLabel>
                  <SubLabel $top={3}>2.2867572</SubLabel>
                  <SubLabel $top={21}>0.00</SubLabel>
                  <SubLabel $top={21} $left={5}>0.00</SubLabel>
                  <SubLabel $top={39}>-3.15993</SubLabel>
                  <SubLabel $top={42}>-85</SubLabel>
                </PriceAxis>
              </PaneRow>
              <TimeAxis>
                {TIMES.map((t) => (
                  <TimeCell key={t}>{t}</TimeCell>
                ))}
              </TimeAxis>
            </ChartArea>
            <TabBar>
              {TABS.map(([label, w], i) => (
                <Tab key={label} $w={w} $active={label === "EURUSD,M1"} $sep={i !== 2 && i !== 3}>
                  {label}
                </Tab>
              ))}
              <Tab $w={52}>AUDUS</Tab>
              <TabArrows>
                <svg width="4" height="7" viewBox="0 0 4 7">
                  <path d="M4 0v7L0 3.5z" fill="#8a8a8a" />
                </svg>
                <svg width="4" height="7" viewBox="0 0 4 7">
                  <path d="M0 0v7l4-3.5z" fill="#111" />
                </svg>
              </TabArrows>
            </TabBar>
            <BottomRule />
            <StatusBar>
              <StatusCell $w={651} $pl={0} $first>For Help, press F1</StatusCell>
              <StatusCell $w={117} />
              <StatusCell $w={102}>2017.03.23 09:40</StatusCell>
              <StatusCell $w={70}>O: 1.07758</StatusCell>
              <StatusCell $w={71}>H: 1.07768</StatusCell>
              <StatusCell $w={68}>L: 1.07755</StatusCell>
              <StatusCell $w={70}>C: 1.07767</StatusCell>
              <StatusCell $w={66}>V: 63</StatusCell>
              <StatusCell $w={143}>
                <SignalBars />
                34948/31 kb
              </StatusCell>
            </StatusBar>
          </TerminalInner>
        </Terminal>
        <Taskbar>
          <TaskIcons />
          <TrayIcons />
        </Taskbar>
      </Page>
    </>
  );
}
